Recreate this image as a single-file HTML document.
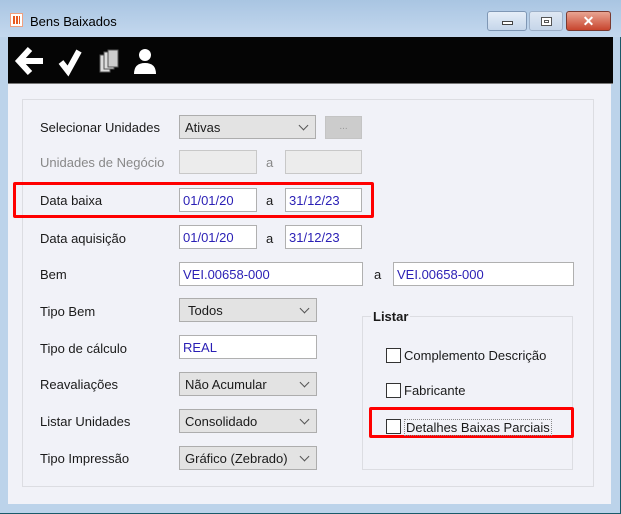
<!DOCTYPE html>
<html><head><meta charset="utf-8"><style>
*{box-sizing:border-box;margin:0;padding:0}
body{width:621px;height:514px;overflow:hidden;background:#bcd3ea;font-family:"Liberation Sans",sans-serif;font-size:13px;color:#1a1a1a;position:relative}
.a{position:absolute}
.title{left:0;top:0;width:621px;height:37px;background:linear-gradient(#a9c5e2,#c4d8ee)}
.tb{left:8px;top:37px;width:605px;height:47px;background:#050505;border-bottom:1px solid #777}
.content{left:8px;top:84px;width:603px;height:420px;background:#f1f2f8}
.panel{left:22px;top:99px;width:572px;height:388px;border:1px solid #dcdde2}
.lbl{left:40px;font-size:13px}
.sel{background:#e3e3e3;border:1px solid #adadad;padding-left:5px;line-height:24px;height:24px}
.sel:after{content:"";position:absolute;right:8px;top:6px;width:6px;height:6px;border-right:1px solid #555;border-bottom:1px solid #555;transform:rotate(45deg)}
.inp{background:#fff;border:1px solid #b0b0b0;padding-left:3px;line-height:24px;height:24px;color:#2a1fb5}
.dis{background:#ececec;border:1px solid #c8c8c8;height:24px}
.red{border:3px solid #f00;border-radius:2px}
.cb{width:15px;height:15px;border:1px solid #333;background:#fff}
</style></head><body>
<div class="a" style="right:0;top:0;width:1px;height:514px;background:#1a5a6a"></div>
<div class="a" style="left:0;bottom:0;width:621px;height:1px;background:#1a5a6a"></div>
<div class="a title"></div>
<div class="a" style="left:10px;top:13px;width:13px;height:14px;background:#fff;border:1px solid #f0a080"><div style="margin:2px;height:8px;background:repeating-linear-gradient(90deg,#e85a20 0 2px,#fff 2px 3px)"></div></div>
<div class="a" style="left:30px;top:14px;font-size:13px;color:#000">Bens Baixados</div>
<div class="a" style="left:487px;top:11px;width:40px;height:20px;border:1px solid #7f97b5;border-radius:3px;background:linear-gradient(#e6eef8,#c5d6ea)"><div class="a" style="left:14px;top:9px;width:11px;height:4px;background:#fff;border:1px solid #444"></div></div>
<div class="a" style="left:529px;top:11px;width:34px;height:20px;border:1px solid #9db0c8;border-radius:3px;background:linear-gradient(#dfe8f3,#c6d6e9)"><div class="a" style="left:11px;top:5px;width:11px;height:9px;border:1px solid #555;background:#fff"><div style="margin:2px;height:3px;border:1px solid #555"></div></div></div>
<div class="a" style="left:566px;top:11px;width:45px;height:20px;border:1px solid #7a3a30;border-radius:3px;background:linear-gradient(#e9a593,#c8452e);color:#fff;font-weight:bold;text-align:center;line-height:18px;font-size:14px">✕</div>
<div class="a tb">
<svg class="a" style="left:-8px;top:0" width="200" height="47" viewBox="0 0 200 47">
<path d="M30 12 L19 24 L30 36 M19 24 H43" stroke="#fff" stroke-width="6" fill="none"/>
<path d="M61 25 L68 34 L79 14" stroke="#fff" stroke-width="6" fill="none"/>
<rect x="100" y="18" width="10" height="17" fill="#ddd" stroke="#555"/><rect x="104" y="15" width="10" height="17" fill="#ddd" stroke="#555"/><rect x="108" y="13" width="10" height="17" fill="#ccc" stroke="#555"/>
<circle cx="145" cy="18" r="6" fill="#fff"/><path d="M134 37 Q134 26 145 26 Q156 26 156 37 Z" fill="#fff"/>
</svg>
</div>
<div class="a content"></div>
<div class="a panel"></div>

<div class="a lbl" style="top:120px">Selecionar Unidades</div>
<div class="a sel" style="left:179px;top:115px;width:137px">Ativas</div>
<div class="a" style="left:325px;top:116px;width:37px;height:23px;background:#ccc;border:1px solid #c4c4c4;color:#999;text-align:center;font-size:10px;line-height:20px">...</div>

<div class="a lbl" style="top:155px;color:#888">Unidades de Negócio</div>
<div class="a dis" style="left:179px;top:150px;width:78px"></div>
<div class="a" style="left:266px;top:155px;color:#888">a</div>
<div class="a dis" style="left:285px;top:150px;width:77px"></div>

<div class="a red" style="left:13px;top:182px;width:361px;height:36px"></div>
<div class="a lbl" style="top:193px">Data baixa</div>
<div class="a inp" style="left:179px;top:188px;width:78px">01/01/20</div>
<div class="a" style="left:266px;top:193px">a</div>
<div class="a inp" style="left:285px;top:188px;width:77px">31/12/23</div>

<div class="a lbl" style="top:231px">Data aquisição</div>
<div class="a inp" style="left:179px;top:225px;width:78px">01/01/20</div>
<div class="a" style="left:266px;top:231px">a</div>
<div class="a inp" style="left:285px;top:225px;width:77px">31/12/23</div>

<div class="a lbl" style="top:267px">Bem</div>
<div class="a inp" style="left:179px;top:262px;width:184px">VEI.00658-000</div>
<div class="a" style="left:374px;top:267px">a</div>
<div class="a inp" style="left:393px;top:262px;width:181px">VEI.00658-000</div>

<div class="a lbl" style="top:304px">Tipo Bem</div>
<div class="a sel" style="left:179px;top:298px;width:138px;padding-left:8px">Todos</div>
<div class="a lbl" style="top:341px">Tipo de cálculo</div>
<div class="a inp" style="left:179px;top:335px;width:138px">REAL</div>
<div class="a lbl" style="top:377px">Reavaliações</div>
<div class="a sel" style="left:179px;top:372px;width:138px">Não Acumular</div>
<div class="a lbl" style="top:414px">Listar Unidades</div>
<div class="a sel" style="left:179px;top:409px;width:138px">Consolidado</div>
<div class="a lbl" style="top:451px">Tipo Impressão</div>
<div class="a sel" style="left:179px;top:446px;width:138px">Gráfico (Zebrado)</div>

<div class="a" style="left:362px;top:316px;width:211px;height:154px;border:1px solid #dcdde2"></div>
<div class="a" style="left:371px;top:309px;padding:0 2px;background:#f1f2f8;font-weight:bold">Listar</div>
<div class="a cb" style="left:386px;top:348px"></div><div class="a" style="left:404px;top:348px">Complemento Descrição</div>
<div class="a cb" style="left:386px;top:383px"></div><div class="a" style="left:404px;top:383px">Fabricante</div>
<div class="a red" style="left:369px;top:407px;width:205px;height:31px"></div>
<div class="a cb" style="left:386px;top:419px"></div><div class="a" style="left:404px;top:419px;border:1px dotted #888;padding:0 1px">Detalhes Baixas Parciais</div>
</body></html>
